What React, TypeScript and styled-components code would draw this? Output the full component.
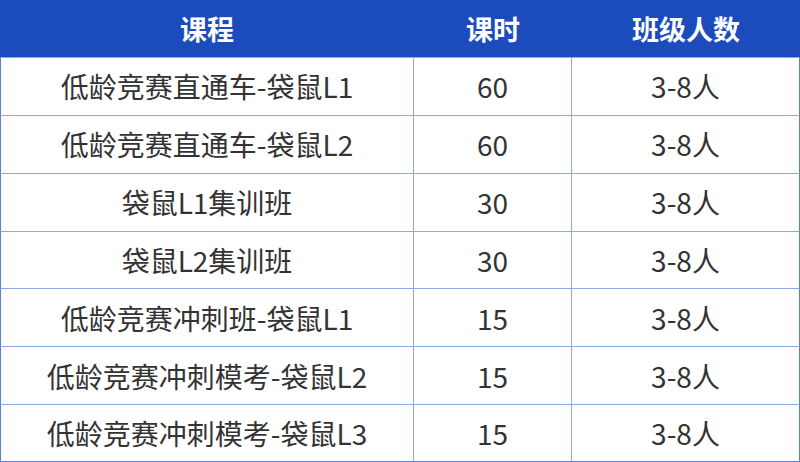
import React from "react";
import styled, { createGlobalStyle } from "styled-components";

const GlobalStyle = createGlobalStyle`
  html, body {
    margin: 0;
    padding: 0;
    background: #ffffff;
  }
  * { box-sizing: border-box; }
`;

const Table = styled.div`
  width: 800px;
  height: 462px;
  display: grid;
  grid-template-columns: 414px 158px 1fr;
  grid-template-rows: 57px repeat(7, 1fr);
  font-family: "Noto Sans CJK SC", "Noto Sans", sans-serif;
  background: #ffffff;
`;

const HeadCell = styled.div`
  background: #1c4bbe;
  color: #ffffff;
  font-size: 27px;
  font-weight: 700;
  display: flex;
  align-items: center;
  justify-content: center;
  line-height: 1;
`;

const Cell = styled.div<{ $first?: boolean; $last?: boolean; $lastRow?: boolean }>`
  display: flex;
  align-items: center;
  justify-content: center;
  color: #333333;
  font-size: 28px;
  font-weight: 400;
  line-height: 1;
  border-top: 1px solid #8ea8e6;
  border-right: 1px solid ${(p) => (p.$last ? "#5b7fd4" : "#8ea8e6")};
  border-left: ${(p) => (p.$first ? "1px solid #5b7fd4" : "none")};
  border-bottom: ${(p) => (p.$lastRow ? "1px solid #5b7fd4" : "none")};
`;

const headers = ["课程", "课时", "班级人数"];

const rows: [string, string, string][] = [
  ["低龄竞赛直通车-袋鼠L1", "60", "3-8人"],
  ["低龄竞赛直通车-袋鼠L2", "60", "3-8人"],
  ["袋鼠L1集训班", "30", "3-8人"],
  ["袋鼠L2集训班", "30", "3-8人"],
  ["低龄竞赛冲刺班-袋鼠L1", "15", "3-8人"],
  ["低龄竞赛冲刺模考-袋鼠L2", "15", "3-8人"],
  ["低龄竞赛冲刺模考-袋鼠L3", "15", "3-8人"],
];

export default function App() {
  return (
    <>
      <GlobalStyle />
      <Table>
        {headers.map((h) => (
          <HeadCell key={h}>{h}</HeadCell>
        ))}
        {rows.map((r, ri) =>
          r.map((c, ci) => (
            <Cell
              key={`${ri}-${ci}`}
              $first={ci === 0}
              $last={ci === 2}
              $lastRow={ri === rows.length - 1}
            >
              {c}
            </Cell>
          ))
        )}
      </Table>
    </>
  );
}
